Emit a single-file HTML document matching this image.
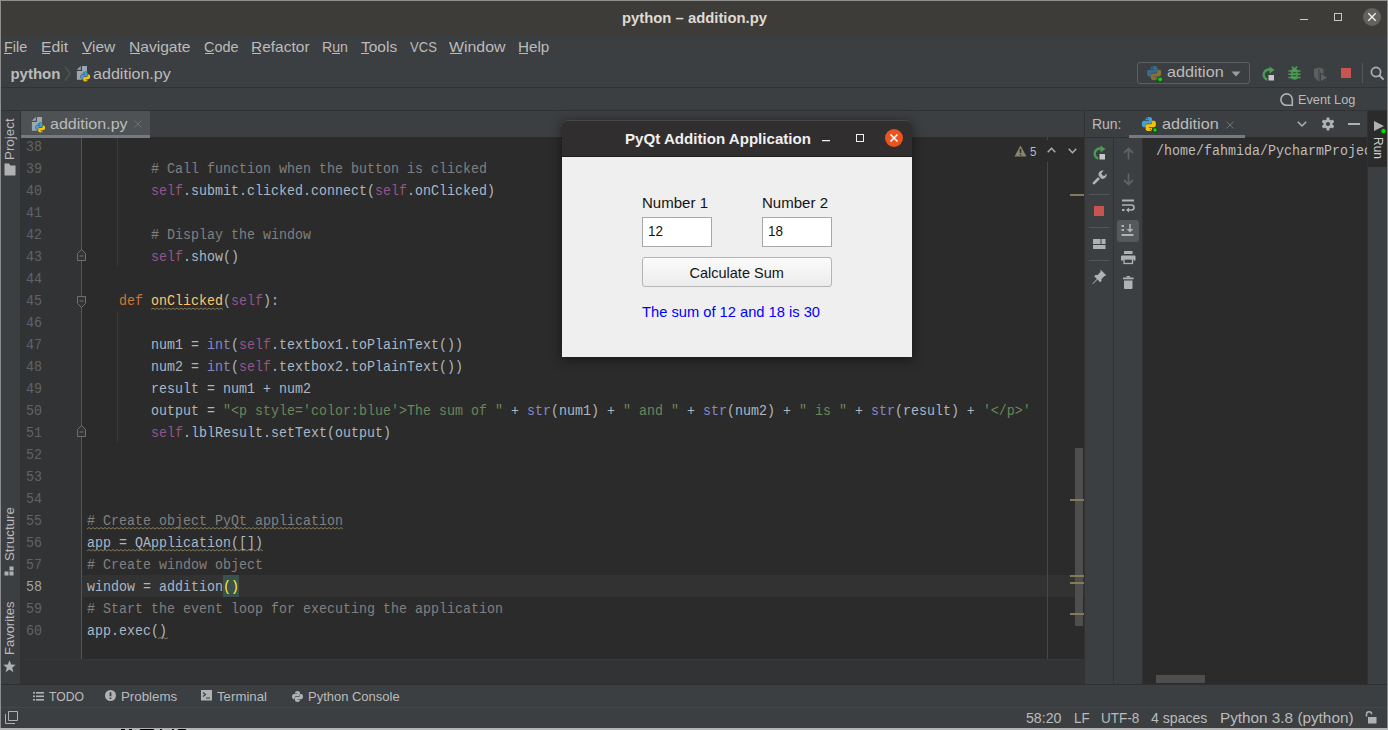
<!DOCTYPE html>
<html><head><meta charset="utf-8">
<style>
*{margin:0;padding:0;box-sizing:border-box}
html,body{width:1388px;height:730px;overflow:hidden;background:#3c3f41;position:relative}
body{font-family:"Liberation Sans",sans-serif}
.a{position:absolute}
.t{position:absolute;white-space:pre;line-height:1}
.L{font-family:"Liberation Sans",sans-serif}
.M{font-family:"Liberation Mono",monospace}
.code{position:absolute;left:87px;white-space:pre;font-family:"Liberation Mono",monospace;font-size:13.333px;line-height:22px;color:#a9b7c6}
.c{color:#808080}.k{color:#cc7832}.s{color:#94558d}.b{color:#8888c6}.g{color:#6a8759}.f{color:#ffc66d}
svg{position:absolute;overflow:visible}
</style></head><body>
<div class="a" style="left:0px;top:0px;width:1388px;height:1px;background:#8e8e8e;"></div>
<div class="a" style="left:0px;top:0px;width:1px;height:730px;background:#8e8e8e;"></div>
<div class="a" style="left:1387px;top:0px;width:1px;height:730px;background:#8e8e8e;"></div>
<div class="a" style="left:1px;top:1px;width:1386px;height:35px;background:#3d3c39;"></div>
<div class="a" style="left:1px;top:36px;width:1386px;height:51px;background:#3c3f41;"></div>
<div class="a" style="left:1px;top:87px;width:1386px;height:1px;background:#323232;"></div>
<div class="a" style="left:1px;top:88px;width:1386px;height:22px;background:#3c3f41;"></div>
<div class="a" style="left:1px;top:110px;width:1386px;height:1px;background:#323232;"></div>
<div class="a" style="left:1px;top:111px;width:19px;height:573px;background:#3c3f41;"></div>
<div class="a" style="left:20px;top:111px;width:1px;height:573px;background:#323232;"></div>
<div class="a" style="left:21px;top:111px;width:1063px;height:26px;background:#3c3f41;"></div>
<div class="a" style="left:21px;top:111px;width:129px;height:24px;background:#4e5254;"></div>
<div class="a" style="left:1084px;top:111px;width:1px;height:573px;background:#323232;"></div>
<div class="a" style="left:21px;top:137px;width:60px;height:522px;background:#313335;"></div>
<div class="a" style="left:81px;top:137px;width:1px;height:522px;background:#555555;"></div>
<div class="a" style="left:82px;top:137px;width:1002px;height:522px;background:#2b2b2b;"></div>
<div class="a" style="left:21px;top:135px;width:129px;height:3px;background:#747a80;"></div>
<div class="a" style="left:82px;top:575px;width:1002px;height:22px;background:#323232;"></div>
<div class="a" style="left:21px;top:659px;width:1063px;height:1px;background:#353739;"></div>
<div class="a" style="left:21px;top:660px;width:1063px;height:24px;background:#313335;"></div>
<div class="a" style="left:1085px;top:111px;width:282px;height:26px;background:#3c3f41;"></div>
<div class="a" style="left:1085px;top:137px;width:58px;height:1px;background:#323232;"></div>
<div class="a" style="left:1085px;top:138px;width:28px;height:546px;background:#3c3f41;"></div>
<div class="a" style="left:1113px;top:138px;width:1px;height:546px;background:#323232;"></div>
<div class="a" style="left:1114px;top:138px;width:28px;height:546px;background:#3c3f41;"></div>
<div class="a" style="left:1142px;top:138px;width:1px;height:546px;background:#323232;"></div>
<div class="a" style="left:1143px;top:137px;width:224px;height:547px;background:#2b2b2b;"></div>
<div class="a" style="left:1129px;top:135px;width:116px;height:3px;background:#747a80;"></div>
<div class="a" style="left:1367px;top:111px;width:1px;height:573px;background:#323232;"></div>
<div class="a" style="left:1368px;top:111px;width:19px;height:573px;background:#3c3f41;"></div>
<div class="a" style="left:1368px;top:111px;width:19px;height:56px;background:#2b2b2b;"></div>
<div class="a" style="left:1px;top:684px;width:1386px;height:1px;background:#2e3032;"></div>
<div class="a" style="left:1px;top:685px;width:1386px;height:22px;background:#3c3f41;"></div>
<div class="a" style="left:1px;top:707px;width:1386px;height:1px;background:#4a4542;"></div>
<div class="a" style="left:1px;top:708px;width:1386px;height:20px;background:#3c3f41;"></div>
<div class="a" style="left:0px;top:728px;width:1388px;height:2px;background:#b4b4b4;"></div>
<div class="t L" style="left:622px;top:10.25px;font-size:15px;color:#dfdbd2;font-weight:700;transform:scaleX(0.9886);transform-origin:0 0;">python – addition.py</div>
<div class="a" style="left:1300px;top:19px;width:8px;height:1px;background:#cfcfcf;"></div>
<div class="a" style="left:1334px;top:13px;width:8px;height:8px;background:transparent;border:1.5px solid #c8c8c8"></div>
<div class="a" style="left:1363px;top:8px;width:18px;height:18px;border-radius:50%;background:#636260"></div>
<svg style="left:1363px;top:8px" width="18" height="18"><path d="M5.3 5.3L12.7 12.7M12.7 5.3L5.3 12.7" stroke="#f2f2f2" stroke-width="1.3"/></svg>
<div class="t L" style="left:4.4px;top:39.25px;font-size:15px;color:#bbbbbb;transform:scaleX(0.9598);transform-origin:0 0;">File</div>
<div class="t L" style="left:41.4px;top:39.25px;font-size:15px;color:#bbbbbb;transform:scaleX(1.0518);transform-origin:0 0;">Edit</div>
<div class="t L" style="left:82.1px;top:39.25px;font-size:15px;color:#bbbbbb;transform:scaleX(1.0326);transform-origin:0 0;">View</div>
<div class="t L" style="left:129.1px;top:39.25px;font-size:15px;color:#bbbbbb;transform:scaleX(1.0388);transform-origin:0 0;">Navigate</div>
<div class="t L" style="left:204.2px;top:39.25px;font-size:15px;color:#bbbbbb;transform:scaleX(0.9621);transform-origin:0 0;">Code</div>
<div class="t L" style="left:251.2px;top:39.25px;font-size:15px;color:#bbbbbb;transform:scaleX(1.0335);transform-origin:0 0;">Refactor</div>
<div class="t L" style="left:322px;top:39.25px;font-size:15px;color:#bbbbbb;transform:scaleX(0.9444);transform-origin:0 0;">Run</div>
<div class="t L" style="left:360.8px;top:39.25px;font-size:15px;color:#bbbbbb;transform:scaleX(1.0334);transform-origin:0 0;">Tools</div>
<div class="t L" style="left:410px;top:39.25px;font-size:15px;color:#bbbbbb;transform:scaleX(0.8721);transform-origin:0 0;">VCS</div>
<div class="t L" style="left:449px;top:39.25px;font-size:15px;color:#bbbbbb;transform:scaleX(1.0589);transform-origin:0 0;">Window</div>
<div class="t L" style="left:518px;top:39.25px;font-size:15px;color:#bbbbbb;transform:scaleX(1.0143);transform-origin:0 0;">Help</div>
<div class="a" style="left:4px;top:53px;width:8px;height:1px;background:#bbbbbb;"></div>
<div class="a" style="left:42px;top:53px;width:8px;height:1px;background:#bbbbbb;"></div>
<div class="a" style="left:82px;top:53px;width:9px;height:1px;background:#bbbbbb;"></div>
<div class="a" style="left:130px;top:53px;width:10px;height:1px;background:#bbbbbb;"></div>
<div class="a" style="left:205px;top:53px;width:9px;height:1px;background:#bbbbbb;"></div>
<div class="a" style="left:252px;top:53px;width:9px;height:1px;background:#bbbbbb;"></div>
<div class="a" style="left:332px;top:53px;width:8px;height:1px;background:#bbbbbb;"></div>
<div class="a" style="left:361px;top:53px;width:8px;height:1px;background:#bbbbbb;"></div>
<div class="a" style="left:450px;top:53px;width:12px;height:1px;background:#bbbbbb;"></div>
<div class="a" style="left:519px;top:53px;width:9px;height:1px;background:#bbbbbb;"></div>
<div class="t L" style="left:10.4px;top:66.25px;font-size:15px;color:#bbbbbb;font-weight:700;">python</div>
<svg style="left:64px;top:66px" width="7" height="15"><path d="M1 0.5L6 7.5L1 14.5" stroke="#5e6366" stroke-width="1" fill="none"/></svg>
<div class="t L" style="left:93.4px;top:66.25px;font-size:15px;color:#bbbbbb;transform:scaleX(1.0722);transform-origin:0 0;">addition.py</div>
<div class="t L" style="left:49.5px;top:116.25px;font-size:15px;color:#bbbbbb;transform:scaleX(1.0694);transform-origin:0 0;">addition.py</div>
<svg style="left:134px;top:120px" width="8" height="8"><path d="M0.5 0.5L7.5 7.5M7.5 0.5L0.5 7.5" stroke="#6e7173" stroke-width="1"/></svg>
<div class="t L" style="left:1297.7px;top:94.38px;font-size:12.5px;color:#bbbbbb;transform:scaleX(1.0178);transform-origin:0 0;">Event Log</div>
<div class="t L" style="left:1091.8px;top:116.67px;font-size:14.5px;color:#bbbbbb;transform:scaleX(0.9628);transform-origin:0 0;">Run:</div>
<div class="t L" style="left:1161.5px;top:116.67px;font-size:14.5px;color:#bbbbbb;transform:scaleX(1.1162);transform-origin:0 0;">addition</div>
<svg style="left:1226px;top:121px" width="8" height="8"><path d="M0.5 0.5L7.5 7.5M7.5 0.5L0.5 7.5" stroke="#6e7173" stroke-width="1"/></svg>
<div class="t L" style="left:1166.6px;top:64.67px;font-size:14.5px;color:#bbbbbb;transform:scaleX(1.1162);transform-origin:0 0;">addition</div>
<div class="t L" style="left:48.8px;top:689.52px;font-size:13.5px;color:#bbbbbb;transform:scaleX(0.9029);transform-origin:0 0;">TODO</div>
<div class="t L" style="left:121.4px;top:689.52px;font-size:13.5px;color:#bbbbbb;transform:scaleX(0.9854);transform-origin:0 0;">Problems</div>
<div class="t L" style="left:217.4px;top:689.52px;font-size:13.5px;color:#bbbbbb;transform:scaleX(0.9801);transform-origin:0 0;">Terminal</div>
<div class="t L" style="left:308.2px;top:689.52px;font-size:13.5px;color:#bbbbbb;transform:scaleX(0.9610);transform-origin:0 0;">Python Console</div>
<div class="t L" style="left:1025.8px;top:710.67px;font-size:14.5px;color:#bbbbbb;transform:scaleX(0.9753);transform-origin:0 0;">58:20</div>
<div class="t L" style="left:1073.5px;top:710.67px;font-size:14.5px;color:#bbbbbb;transform:scaleX(0.9160);transform-origin:0 0;">LF</div>
<div class="t L" style="left:1101.2px;top:710.67px;font-size:14.5px;color:#bbbbbb;transform:scaleX(0.9296);transform-origin:0 0;">UTF-8</div>
<div class="t L" style="left:1151px;top:710.67px;font-size:14.5px;color:#bbbbbb;transform:scaleX(0.9716);transform-origin:0 0;">4 spaces</div>
<div class="t L" style="left:1220.2px;top:710.67px;font-size:14.5px;color:#bbbbbb;transform:scaleX(1.0548);transform-origin:0 0;">Python 3.8 (python)</div>
<div class="t M" style="left:26px;top:140.87px;font-size:13.333px;color:#606366;transform:scaleY(1.13);transform-origin:0 10.13px;">38</div>
<div class="t M" style="left:26px;top:162.87px;font-size:13.333px;color:#606366;transform:scaleY(1.13);transform-origin:0 10.13px;">39</div>
<div class="t M" style="left:26px;top:184.87px;font-size:13.333px;color:#606366;transform:scaleY(1.13);transform-origin:0 10.13px;">40</div>
<div class="t M" style="left:26px;top:206.87px;font-size:13.333px;color:#606366;transform:scaleY(1.13);transform-origin:0 10.13px;">41</div>
<div class="t M" style="left:26px;top:228.87px;font-size:13.333px;color:#606366;transform:scaleY(1.13);transform-origin:0 10.13px;">42</div>
<div class="t M" style="left:26px;top:250.87px;font-size:13.333px;color:#606366;transform:scaleY(1.13);transform-origin:0 10.13px;">43</div>
<div class="t M" style="left:26px;top:272.87px;font-size:13.333px;color:#606366;transform:scaleY(1.13);transform-origin:0 10.13px;">44</div>
<div class="t M" style="left:26px;top:294.87px;font-size:13.333px;color:#606366;transform:scaleY(1.13);transform-origin:0 10.13px;">45</div>
<div class="t M" style="left:26px;top:316.87px;font-size:13.333px;color:#606366;transform:scaleY(1.13);transform-origin:0 10.13px;">46</div>
<div class="t M" style="left:26px;top:338.87px;font-size:13.333px;color:#606366;transform:scaleY(1.13);transform-origin:0 10.13px;">47</div>
<div class="t M" style="left:26px;top:360.87px;font-size:13.333px;color:#606366;transform:scaleY(1.13);transform-origin:0 10.13px;">48</div>
<div class="t M" style="left:26px;top:382.87px;font-size:13.333px;color:#606366;transform:scaleY(1.13);transform-origin:0 10.13px;">49</div>
<div class="t M" style="left:26px;top:404.87px;font-size:13.333px;color:#606366;transform:scaleY(1.13);transform-origin:0 10.13px;">50</div>
<div class="t M" style="left:26px;top:426.87px;font-size:13.333px;color:#606366;transform:scaleY(1.13);transform-origin:0 10.13px;">51</div>
<div class="t M" style="left:26px;top:448.87px;font-size:13.333px;color:#606366;transform:scaleY(1.13);transform-origin:0 10.13px;">52</div>
<div class="t M" style="left:26px;top:470.87px;font-size:13.333px;color:#606366;transform:scaleY(1.13);transform-origin:0 10.13px;">53</div>
<div class="t M" style="left:26px;top:492.87px;font-size:13.333px;color:#606366;transform:scaleY(1.13);transform-origin:0 10.13px;">54</div>
<div class="t M" style="left:26px;top:514.87px;font-size:13.333px;color:#606366;transform:scaleY(1.13);transform-origin:0 10.13px;">55</div>
<div class="t M" style="left:26px;top:536.87px;font-size:13.333px;color:#606366;transform:scaleY(1.13);transform-origin:0 10.13px;">56</div>
<div class="t M" style="left:26px;top:558.87px;font-size:13.333px;color:#606366;transform:scaleY(1.13);transform-origin:0 10.13px;">57</div>
<div class="t M" style="left:26px;top:580.87px;font-size:13.333px;color:#a4a3a3;transform:scaleY(1.13);transform-origin:0 10.13px;">58</div>
<div class="t M" style="left:26px;top:602.87px;font-size:13.333px;color:#606366;transform:scaleY(1.13);transform-origin:0 10.13px;">59</div>
<div class="t M" style="left:26px;top:624.87px;font-size:13.333px;color:#606366;transform:scaleY(1.13);transform-origin:0 10.13px;">60</div>
<div class="t M" style="left:87px;top:162.87px;font-size:13.333px;color:#a9b7c6;transform:scaleY(1.13);transform-origin:0 10.13px">        <span class="c"># Call function when the button is clicked</span></div>
<div class="t M" style="left:87px;top:184.87px;font-size:13.333px;color:#a9b7c6;transform:scaleY(1.13);transform-origin:0 10.13px">        <span class="s">self</span>.submit.clicked.connect(<span class="s">self</span>.onClicked)</div>
<div class="t M" style="left:87px;top:228.87px;font-size:13.333px;color:#a9b7c6;transform:scaleY(1.13);transform-origin:0 10.13px">        <span class="c"># Display the window</span></div>
<div class="t M" style="left:87px;top:250.87px;font-size:13.333px;color:#a9b7c6;transform:scaleY(1.13);transform-origin:0 10.13px">        <span class="s">self</span>.show()</div>
<div class="t M" style="left:87px;top:294.87px;font-size:13.333px;color:#a9b7c6;transform:scaleY(1.13);transform-origin:0 10.13px">    <span class="k">def</span> <span class="f">onClicked</span>(<span class="s">self</span>):</div>
<div class="t M" style="left:87px;top:338.87px;font-size:13.333px;color:#a9b7c6;transform:scaleY(1.13);transform-origin:0 10.13px">        num1 = <span class="b">int</span>(<span class="s">self</span>.textbox1.toPlainText())</div>
<div class="t M" style="left:87px;top:360.87px;font-size:13.333px;color:#a9b7c6;transform:scaleY(1.13);transform-origin:0 10.13px">        num2 = <span class="b">int</span>(<span class="s">self</span>.textbox2.toPlainText())</div>
<div class="t M" style="left:87px;top:382.87px;font-size:13.333px;color:#a9b7c6;transform:scaleY(1.13);transform-origin:0 10.13px">        result = num1 + num2</div>
<div class="t M" style="left:87px;top:404.87px;font-size:13.333px;color:#a9b7c6;transform:scaleY(1.13);transform-origin:0 10.13px">        output = <span class="g">"&lt;p style='color:blue'&gt;The sum of "</span> + <span class="b">str</span>(num1) + <span class="g">" and "</span> + <span class="b">str</span>(num2) + <span class="g">" is "</span> + <span class="b">str</span>(result) + <span class="g">'&lt;/p&gt;'</span></div>
<div class="t M" style="left:87px;top:426.87px;font-size:13.333px;color:#a9b7c6;transform:scaleY(1.13);transform-origin:0 10.13px">        <span class="s">self</span>.lblResult.setText(output)</div>
<div class="t M" style="left:87px;top:514.87px;font-size:13.333px;color:#a9b7c6;transform:scaleY(1.13);transform-origin:0 10.13px"><span class="c"># Create object PyQt application</span></div>
<div class="t M" style="left:87px;top:536.87px;font-size:13.333px;color:#a9b7c6;transform:scaleY(1.13);transform-origin:0 10.13px">app = QApplication([])</div>
<div class="t M" style="left:87px;top:558.87px;font-size:13.333px;color:#a9b7c6;transform:scaleY(1.13);transform-origin:0 10.13px"><span class="c"># Create window object</span></div>
<div class="a" style="left:223px;top:575px;width:16px;height:22px;background:#3b514d;"></div>
<div class="t M" style="left:87px;top:580.87px;font-size:13.333px;color:#a9b7c6;transform:scaleY(1.13);transform-origin:0 10.13px">window = addition<span style="color:#ffef28">()</span></div>
<div class="t M" style="left:87px;top:602.87px;font-size:13.333px;color:#a9b7c6;transform:scaleY(1.13);transform-origin:0 10.13px"><span class="c"># Start the event loop for executing the application</span></div>
<div class="t M" style="left:87px;top:624.87px;font-size:13.333px;color:#a9b7c6;transform:scaleY(1.13);transform-origin:0 10.13px">app.exec()</div>
<div class="a" style="left:1143px;top:138px;width:224px;height:30px;overflow:hidden"><div class="t M" style="left:13px;top:6.87px;font-size:13.333px;color:#bbbbbb;transform:scaleY(1.13);transform-origin:0 10.13px">/home/fahmida/PycharmProjects/python/addition.py</div></div>
<div class="a" style="left:562px;top:120px;width:350px;height:237px;border-radius:6px 6px 0 0;background:#302e2e;border-top:1px solid #4a4846;box-shadow:0 2px 12px rgba(0,0,0,0.5)"></div>
<div class="a" style="left:562px;top:156px;width:350px;height:1px;background:#1e1e1e;"></div>
<div class="a" style="left:562px;top:157px;width:350px;height:200px;background:#efefef;"></div>
<div class="t L" style="left:624.8px;top:131.25px;font-size:15px;color:#f0f0f0;font-weight:700;transform:scaleX(1.0069);transform-origin:0 0;">PyQt Addition Application</div>
<div class="a" style="left:822px;top:140px;width:8px;height:1px;background:#f0f0f0;box-shadow:0 0.5px 0 rgba(240,240,240,0.5)"></div>
<div class="a" style="left:856px;top:134px;width:8px;height:8px;background:transparent;border:1.5px solid #f0f0f0"></div>
<div class="a" style="left:885px;top:129px;width:18px;height:18px;border-radius:50%;background:#e95420"></div>
<svg style="left:885px;top:129px" width="18" height="18"><path d="M5.5 5.5L12.5 12.5M12.5 5.5L5.5 12.5" stroke="#ffffff" stroke-width="1.6"/></svg>
<div class="t L" style="left:642.3px;top:195.68px;font-size:14.5px;color:#141414;transform:scaleX(1.0366);transform-origin:0 0;">Number 1</div>
<div class="t L" style="left:762.4px;top:195.68px;font-size:14.5px;color:#141414;transform:scaleX(1.0366);transform-origin:0 0;">Number 2</div>
<div class="a" style="left:642px;top:217px;width:70px;height:30px;background:#ffffff;border:1px solid #a8a8a8"></div>
<div class="a" style="left:762px;top:217px;width:70px;height:30px;background:#ffffff;border:1px solid #a8a8a8"></div>
<div class="t L" style="left:648px;top:223.68px;font-size:14.5px;color:#141414;transform:scaleX(0.9293);transform-origin:0 0;">12</div>
<div class="t L" style="left:768px;top:223.68px;font-size:14.5px;color:#141414;transform:scaleX(0.9293);transform-origin:0 0;">18</div>
<div class="a" style="left:642px;top:257px;width:190px;height:30px;background:linear-gradient(#fbfbfb,#ececec);border:1px solid #b4b4b4;border-radius:3px"></div>
<div class="t L" style="left:689.5px;top:265.68px;font-size:14.5px;color:#141414;">Calculate Sum</div>
<div class="t L" style="left:642px;top:304.68px;font-size:14.5px;color:#0000ff;transform:scaleX(1.0129);transform-origin:0 0;">The sum of 12 and 18 is 30</div>
<svg style="left:76px;top:65px;" width="16" height="17" viewBox="0 0 16 17"><path d="M0.8 4.7L4.8 0.9V4.7Z" fill="#9aa7b0"/><path d="M6 1H11V14.8H0.9V5.9H6Z" fill="#9aa7b0"/><g transform="translate(4.4,6.7) scale(0.63)"><path d="M4.5 3Q4.5 0.5 8 0.5Q11.5 0.5 11.5 3V6Q11.5 7.7 9.8 7.7H6.3Q4.5 7.7 4.5 9.5V11.5H2.6Q0.5 11.5 0.5 8Q0.5 4.5 2.6 4.5H8V3.8H4.5Z" fill="#40a0d8" stroke="#3c3f41" stroke-width="1.3" paint-order="stroke"/><path d="M4.5 3Q4.5 0.5 8 0.5Q11.5 0.5 11.5 3V6Q11.5 7.7 9.8 7.7H6.3Q4.5 7.7 4.5 9.5V11.5H2.6Q0.5 11.5 0.5 8Q0.5 4.5 2.6 4.5H8V3.8H4.5Z" fill="#f5c400" transform="rotate(180 8 8)" stroke="#3c3f41" stroke-width="1.3" paint-order="stroke"/><circle cx="6.3" cy="2.2" r="0.75" fill="#2b3b4a"/><circle cx="9.7" cy="13.8" r="0.75" fill="#6b5a10"/></g></svg>
<svg style="left:31px;top:116px;" width="16" height="17" viewBox="0 0 16 17"><path d="M0.8 4.7L4.8 0.9V4.7Z" fill="#9aa7b0"/><path d="M6 1H11V14.8H0.9V5.9H6Z" fill="#9aa7b0"/><g transform="translate(4.4,6.7) scale(0.63)"><path d="M4.5 3Q4.5 0.5 8 0.5Q11.5 0.5 11.5 3V6Q11.5 7.7 9.8 7.7H6.3Q4.5 7.7 4.5 9.5V11.5H2.6Q0.5 11.5 0.5 8Q0.5 4.5 2.6 4.5H8V3.8H4.5Z" fill="#40a0d8" stroke="#3c3f41" stroke-width="1.3" paint-order="stroke"/><path d="M4.5 3Q4.5 0.5 8 0.5Q11.5 0.5 11.5 3V6Q11.5 7.7 9.8 7.7H6.3Q4.5 7.7 4.5 9.5V11.5H2.6Q0.5 11.5 0.5 8Q0.5 4.5 2.6 4.5H8V3.8H4.5Z" fill="#f5c400" transform="rotate(180 8 8)" stroke="#3c3f41" stroke-width="1.3" paint-order="stroke"/><circle cx="6.3" cy="2.2" r="0.75" fill="#2b3b4a"/><circle cx="9.7" cy="13.8" r="0.75" fill="#6b5a10"/></g></svg>
<svg style="left:1141px;top:116px;" width="16" height="16" viewBox="0 0 16 16"><g transform="translate(0.4,0.5) scale(0.933)"><path d="M4.5 3Q4.5 0.5 8 0.5Q11.5 0.5 11.5 3V6Q11.5 7.7 9.8 7.7H6.3Q4.5 7.7 4.5 9.5V11.5H2.6Q0.5 11.5 0.5 8Q0.5 4.5 2.6 4.5H8V3.8H4.5Z" fill="#40a0d8" /><path d="M4.5 3Q4.5 0.5 8 0.5Q11.5 0.5 11.5 3V6Q11.5 7.7 9.8 7.7H6.3Q4.5 7.7 4.5 9.5V11.5H2.6Q0.5 11.5 0.5 8Q0.5 4.5 2.6 4.5H8V3.8H4.5Z" fill="#f5c400" transform="rotate(180 8 8)" /><circle cx="6.3" cy="2.2" r="0.75" fill="#2b3b4a"/><circle cx="9.7" cy="13.8" r="0.75" fill="#6b5a10"/></g><circle cx="14" cy="14" r="2.3" fill="#00e000" stroke="#1e1e1e" stroke-width="0.8"/></svg>
<div class="a" style="left:1137px;top:62px;width:113px;height:22px;border:1px solid #5e6060;border-radius:3px"></div>
<svg style="left:1146px;top:65px;" width="16" height="16" viewBox="0 0 16 16"><g transform="translate(0.5,0.5) scale(0.95)"><path d="M4.5 3Q4.5 0.5 8 0.5Q11.5 0.5 11.5 3V6Q11.5 7.7 9.8 7.7H6.3Q4.5 7.7 4.5 9.5V11.5H2.6Q0.5 11.5 0.5 8Q0.5 4.5 2.6 4.5H8V3.8H4.5Z" fill="#3c6a8a" /><path d="M4.5 3Q4.5 0.5 8 0.5Q11.5 0.5 11.5 3V6Q11.5 7.7 9.8 7.7H6.3Q4.5 7.7 4.5 9.5V11.5H2.6Q0.5 11.5 0.5 8Q0.5 4.5 2.6 4.5H8V3.8H4.5Z" fill="#85723a" transform="rotate(180 8 8)" /><circle cx="6.3" cy="2.2" r="0.75" fill="#2b3b4a"/><circle cx="9.7" cy="13.8" r="0.75" fill="#6b5a10"/></g><circle cx="14.2" cy="14.3" r="2.4" fill="#00e000" stroke="#2a2a2a" stroke-width="0.7"/></svg>
<svg style="left:1231px;top:71px;" width="10" height="6" viewBox="0 0 10 6"><path d="M0.5 0.5H9.5L5 5.5Z" fill="#9a9da1"/></svg>
<svg style="left:1261px;top:66px;" width="14" height="15" viewBox="0 0 14 15"><path d="M9.4 3.8A5 5 0 1 0 6.2 13.6" stroke="#499c54" stroke-width="2.4" fill="none"/><path d="M8.5 0.5L13.5 4L8.5 7.5Z" fill="#499c54"/><rect x="7.5" y="9" width="5.5" height="5.5" fill="#c7c7c7"/></svg>
<svg style="left:1287.5px;top:66px;" width="13" height="14" viewBox="0 0 13 14"><path d="M3.9 0.6L6.2 2.8M9.1 0.6L6.8 2.8" stroke="#499c54" stroke-width="1.6"/><path d="M3.2 5Q3.2 2.5 6.5 2.5Q9.8 2.5 9.8 5V11Q9.8 13.7 6.5 13.7Q3.2 13.7 3.2 11Z" fill="#499c54"/><path d="M0.4 5.1H12.6M0.4 8.3H12.6M0.4 11.5H12.6" stroke="#499c54" stroke-width="1.5"/><path d="M4.7 6.7H8.3M4.7 9.7H8.3" stroke="#3c3f41" stroke-width="1.1"/></svg>
<svg style="left:1312.5px;top:67px;" width="16" height="15" viewBox="0 0 16 15"><path d="M1 2L6 0.5L10.5 2V8Q10.5 12 6 14Q1.5 12 1 8Z" fill="#5e6060"/><path d="M6 2V13" stroke="#3c3f41" stroke-width="1"/><path d="M7.5 6L15 10.5L7.5 15Z" fill="#5e6060" stroke="#3c3f41" stroke-width="1"/></svg>
<div class="a" style="left:1341px;top:68px;width:10px;height:10px;background:#c75450;"></div>
<div class="a" style="left:1362px;top:63px;width:1px;height:20px;background:#515658;"></div>
<svg style="left:1370px;top:66px;" width="15" height="15" viewBox="0 0 15 15"><circle cx="6" cy="6" r="4.6" stroke="#afb1b3" stroke-width="1.7" fill="none"/><path d="M9.3 9.3L13.6 13.6" stroke="#afb1b3" stroke-width="2"/></svg>
<svg style="left:1280px;top:93px;" width="14" height="13" viewBox="0 0 14 13"><path d="M12.3 12.3H6.5A5.7 5.7 0 1 1 12.3 6.5Z" stroke="#afb1b3" stroke-width="1.6" fill="none"/></svg>
<svg style="left:1297px;top:121px;" width="10" height="6" viewBox="0 0 10 6"><path d="M0.8 0.8L5 5L9.2 0.8" stroke="#afb1b3" stroke-width="1.5" fill="none"/></svg>
<svg style="left:1321px;top:117px;" width="14" height="14" viewBox="0 0 14 14"><rect x="5.5" y="0.6" width="3" height="12.8" rx="0.7" fill="#afb1b3" transform="rotate(0 7 7)"/><rect x="5.5" y="0.6" width="3" height="12.8" rx="0.7" fill="#afb1b3" transform="rotate(60 7 7)"/><rect x="5.5" y="0.6" width="3" height="12.8" rx="0.7" fill="#afb1b3" transform="rotate(120 7 7)"/><circle cx="7" cy="7" r="4.6" fill="#afb1b3"/><circle cx="7" cy="7" r="2" fill="#3c3f41"/></svg>
<div class="a" style="left:1348px;top:123px;width:12px;height:2px;background:#afb1b3;"></div>
<svg style="left:1373px;top:120px;" width="14" height="14" viewBox="0 0 14 14"><path d="M1 1L11 6L1 11Z" fill="#afb1b3"/><circle cx="10.5" cy="11" r="2.6" fill="#00e000" stroke="#2b2b2b" stroke-width="0.7"/></svg>
<div class="t L" style="left:3.3px;top:160.4px;font-size:13px;color:#bbbbbb;transform-origin:0 0;transform:rotate(-90deg) scaleX(1.0280)">Project</div>
<div class="t L" style="left:3.3px;top:560.8px;font-size:13px;color:#bbbbbb;transform-origin:0 0;transform:rotate(-90deg) scaleX(1.0199)">Structure</div>
<div class="t L" style="left:3.3px;top:655px;font-size:13px;color:#bbbbbb;transform-origin:0 0;transform:rotate(-90deg) scaleX(0.9987)">Favorites</div>
<div class="t L" style="left:1385px;top:137px;font-size:13px;color:#cfcfcf;transform-origin:0 0;transform:rotate(90deg) scaleX(0.9221)">Run</div>
<svg style="left:4px;top:163px;" width="12" height="13" viewBox="0 0 12 13"><path d="M0.5 0.5H5L6.5 2.5H11.5V12.5H0.5Z" fill="#afb1b3"/></svg>
<svg style="left:4px;top:566px;" width="11" height="11" viewBox="0 0 11 11"><rect x="5.5" y="0.5" width="4" height="4" fill="#afb1b3"/><rect x="0.5" y="5.5" width="4" height="4" fill="#afb1b3"/><rect x="5.5" y="5.5" width="4" height="4" fill="#afb1b3"/></svg>
<svg style="left:3px;top:660px;" width="13" height="13" viewBox="0 0 13 13"><path d="M6.5 0.3L8.2 4.6L12.7 4.8L9.2 7.7L10.4 12.2L6.5 9.6L2.6 12.2L3.8 7.7L0.3 4.8L4.8 4.6Z" fill="#afb1b3"/></svg>
<div class="a" style="left:117px;top:138px;width:1px;height:128px;background:#3b3b3b;"></div>
<div class="a" style="left:117px;top:311px;width:1px;height:131px;background:#3b3b3b;"></div>
<div class="a" style="left:1047px;top:137px;width:1px;height:3px;background:#474747;"></div>
<div class="a" style="left:1047px;top:162px;width:1px;height:497px;background:#474747;"></div>
<svg style="left:77px;top:249px;" width="9" height="12" viewBox="0 0 9 12"><path d="M0.5 11.5V4.5L4.5 0.5L8.5 4.5V11.5Z" fill="#313335" stroke="#6f7173" stroke-width="1"/><path d="M2.5 7H6.5" stroke="#6f7173" stroke-width="1"/></svg>
<svg style="left:77px;top:295.5px;" width="9" height="12" viewBox="0 0 9 12"><path d="M0.5 0.5V7.5L4.5 11.5L8.5 7.5V0.5Z" fill="#313335" stroke="#6f7173" stroke-width="1"/><path d="M2.5 5H6.5" stroke="#6f7173" stroke-width="1"/></svg>
<svg style="left:77px;top:425px;" width="9" height="12" viewBox="0 0 9 12"><path d="M0.5 11.5V4.5L4.5 0.5L8.5 4.5V11.5Z" fill="#313335" stroke="#6f7173" stroke-width="1"/><path d="M2.5 7H6.5" stroke="#6f7173" stroke-width="1"/></svg>
<svg style="left:1013.5px;top:144.5px;" width="13" height="12" viewBox="0 0 13 12"><path d="M6.5 0.5L12.5 11.5H0.5Z" fill="#8c8469"/><path d="M6.5 4V8M6.5 9.3V10.6" stroke="#2b2b2b" stroke-width="1.5"/></svg>
<div class="t L" style="left:1029.6px;top:145.25px;font-size:13px;color:#bbbbbb;transform:scaleX(0.8847);transform-origin:0 0;">5</div>
<svg style="left:1046.5px;top:147px;" width="9" height="6" viewBox="0 0 9 6"><path d="M0.7 5.3L4.5 1.3L8.3 5.3" stroke="#afb1b3" stroke-width="1.4" fill="none"/></svg>
<svg style="left:1067.5px;top:148px;" width="9" height="6" viewBox="0 0 9 6"><path d="M0.7 0.7L4.5 4.7L8.3 0.7" stroke="#afb1b3" stroke-width="1.4" fill="none"/></svg>
<div class="a" style="left:1075px;top:448px;width:8px;height:178px;background:#4e4e4e;"></div>
<div class="a" style="left:1070px;top:194px;width:14px;height:2px;background:#847959;"></div>
<div class="a" style="left:1070px;top:498.5px;width:14px;height:2px;background:#847959;"></div>
<div class="a" style="left:1070px;top:575px;width:14px;height:2px;background:#847959;"></div>
<div class="a" style="left:1070px;top:582px;width:14px;height:2px;background:#847959;"></div>
<div class="a" style="left:1070px;top:613px;width:14px;height:2px;background:#847959;"></div>
<svg style="left:0px;top:0px;left:0;top:0" width="1" height="1" viewBox="0 0 1 1"><path d="M151 309.5L153 308L155 309.5L157 308L159 309.5L161 308L163 309.5L165 308L167 309.5L169 308L171 309.5L173 308L175 309.5L177 308L179 309.5L181 308L183 309.5L185 308L187 309.5L189 308L191 309.5L193 308L195 309.5L197 308L199 309.5L201 308L203 309.5L205 308L207 309.5L209 308L211 309.5L213 308L215 309.5L217 308L219 309.5L221 308L223 309.5" stroke="#8c7f5a" stroke-width="0.9" fill="none"/></svg>
<svg style="left:0px;top:0px;left:0;top:0" width="1" height="1" viewBox="0 0 1 1"><path d="M87 529.0L89 527.5L91 529.0L93 527.5L95 529.0L97 527.5L99 529.0L101 527.5L103 529.0L105 527.5L107 529.0L109 527.5L111 529.0L113 527.5L115 529.0L117 527.5L119 529.0L121 527.5L123 529.0L125 527.5L127 529.0L129 527.5L131 529.0L133 527.5L135 529.0L137 527.5L139 529.0L141 527.5L143 529.0L145 527.5L147 529.0L149 527.5L151 529.0L153 527.5L155 529.0L157 527.5L159 529.0L161 527.5L163 529.0L165 527.5L167 529.0L169 527.5L171 529.0L173 527.5L175 529.0L177 527.5L179 529.0L181 527.5L183 529.0L185 527.5L187 529.0L189 527.5L191 529.0L193 527.5L195 529.0L197 527.5L199 529.0L201 527.5L203 529.0L205 527.5L207 529.0L209 527.5L211 529.0L213 527.5L215 529.0L217 527.5L219 529.0L221 527.5L223 529.0L225 527.5L227 529.0L229 527.5L231 529.0L233 527.5L235 529.0L237 527.5L239 529.0L241 527.5L243 529.0L245 527.5L247 529.0L249 527.5L251 529.0L253 527.5L255 529.0L257 527.5L259 529.0L261 527.5L263 529.0L265 527.5L267 529.0L269 527.5L271 529.0L273 527.5L275 529.0L277 527.5L279 529.0L281 527.5L283 529.0L285 527.5L287 529.0L289 527.5L291 529.0L293 527.5L295 529.0L297 527.5L299 529.0L301 527.5L303 529.0L305 527.5L307 529.0L309 527.5L311 529.0L313 527.5L315 529.0L317 527.5L319 529.0L321 527.5L323 529.0L325 527.5L327 529.0L329 527.5L331 529.0L333 527.5L335 529.0L337 527.5L339 529.0L341 527.5L343 529.0" stroke="#8c7f5a" stroke-width="0.9" fill="none"/></svg>
<svg style="left:0px;top:0px;left:0;top:0" width="1" height="1" viewBox="0 0 1 1"><path d="M87 551.0L89 549.5L91 551.0L93 549.5L95 551.0L97 549.5L99 551.0L101 549.5L103 551.0L105 549.5L107 551.0L109 549.5L111 551.0L113 549.5L115 551.0L117 549.5L119 551.0L121 549.5L123 551.0L125 549.5L127 551.0L129 549.5L131 551.0L133 549.5L135 551.0L137 549.5L139 551.0L141 549.5L143 551.0L145 549.5L147 551.0L149 549.5L151 551.0L153 549.5L155 551.0L157 549.5L159 551.0L161 549.5L163 551.0L165 549.5L167 551.0L169 549.5L171 551.0L173 549.5L175 551.0L177 549.5L179 551.0L181 549.5L183 551.0L185 549.5L187 551.0L189 549.5L191 551.0L193 549.5L195 551.0L197 549.5L199 551.0L201 549.5L203 551.0L205 549.5L207 551.0L209 549.5L211 551.0L213 549.5L215 551.0L217 549.5L219 551.0L221 549.5L223 551.0L225 549.5L227 551.0L229 549.5L231 551.0L233 549.5L235 551.0L237 549.5L239 551.0L241 549.5L243 551.0L245 549.5L247 551.0L249 549.5L251 551.0L253 549.5L255 551.0L257 549.5L259 551.0L261 549.5L263 551.0" stroke="#8c7f5a" stroke-width="0.9" fill="none"/></svg>
<svg style="left:0px;top:0px;left:0;top:0" width="1" height="1" viewBox="0 0 1 1"><path d="M158 639.0L160 637.5L162 639.0L164 637.5L166 639.0L168 637.5" stroke="#8c7f5a" stroke-width="0.9" fill="none"/></svg>
<svg style="left:1092px;top:145px;" width="15" height="15" viewBox="0 0 15 15"><path d="M9.4 3.8A5 5 0 1 0 6.2 13.6" stroke="#499c54" stroke-width="2.4" fill="none"/><path d="M8.5 0.5L13.5 4L8.5 7.5Z" fill="#499c54"/><rect x="7.5" y="9" width="5.5" height="5.5" fill="#c7c7c7"/></svg>
<svg style="left:1092px;top:170px;" width="15" height="15" viewBox="0 0 15 15"><path d="M1.2 13.8L7 8" stroke="#afb1b3" stroke-width="2.6"/><path d="M6.5 5.5A4.2 4.2 0 0 1 11.8 0.6L9.4 3.2L10.3 5.2L12.3 6L14.4 3.4A4.2 4.2 0 0 1 9.4 8.8Z" fill="#afb1b3"/></svg>
<div class="a" style="left:1089px;top:194px;width:20px;height:1px;background:#515658;"></div>
<div class="a" style="left:1094px;top:206px;width:10px;height:10px;background:#c75450;"></div>
<div class="a" style="left:1089px;top:227px;width:20px;height:1px;background:#515658;"></div>
<svg style="left:1093px;top:239px;" width="13" height="11" viewBox="0 0 13 11"><rect x="0" y="0" width="7.5" height="5" fill="#afb1b3"/><rect x="8.5" y="0" width="4" height="5" fill="#afb1b3"/><rect x="0" y="6" width="12.5" height="4" fill="#afb1b3"/></svg>
<div class="a" style="left:1089px;top:260px;width:20px;height:1px;background:#515658;"></div>
<svg style="left:1092px;top:269px;" width="15" height="16" viewBox="0 0 15 16"><path d="M8.5 0.5L14.5 6.5L12.5 7L9.5 10L9.5 12L8.2 13.3L5.5 10.6L1 15L0.5 14.5L4.9 10L2.2 7.3L3.5 6L5.5 6L8.5 3Z" fill="#afb1b3"/></svg>
<svg style="left:1123px;top:147px;" width="11" height="13" viewBox="0 0 11 13"><path d="M5.5 12.5V1.5M1 6L5.5 1.5L10 6" stroke="#5f6264" stroke-width="1.8" fill="none"/></svg>
<svg style="left:1123px;top:173px;" width="11" height="13" viewBox="0 0 11 13"><path d="M5.5 0.5V11.5M1 7L5.5 11.5L10 7" stroke="#5f6264" stroke-width="1.8" fill="none"/></svg>
<svg style="left:1121px;top:199px;" width="14" height="14" viewBox="0 0 14 14"><path d="M1 1.5H13" stroke="#afb1b3" stroke-width="2"/><path d="M1 6H10.5A2.5 2.5 0 0 1 10.5 11H7" stroke="#afb1b3" stroke-width="1.6" fill="none"/><path d="M8 8.5L5 11L8 13.5Z" fill="#afb1b3"/><rect x="1" y="10" width="2.5" height="2" fill="#afb1b3"/></svg>
<div class="a" style="left:1117px;top:220px;width:22px;height:22px;border-radius:3px;background:#55595c"></div>
<svg style="left:1121px;top:224px;" width="14" height="13" viewBox="0 0 14 13"><rect x="0.5" y="1" width="2.5" height="2" fill="#afb1b3"/><rect x="0.5" y="5" width="2.5" height="2" fill="#afb1b3"/><path d="M9 0V7" stroke="#afb1b3" stroke-width="1.6"/><path d="M5.5 5L9 8.5L12.5 5Z" fill="#afb1b3"/><rect x="0.5" y="10" width="12" height="2" fill="#afb1b3"/></svg>
<svg style="left:1121px;top:251px;" width="15" height="13" viewBox="0 0 15 13"><rect x="3" y="0" width="8.5" height="3" fill="#afb1b3"/><path d="M1 4.5H13.5Q14.5 4.5 14.5 5.5V9.5H12.5V8H2.5V9.5H0V5.5Q0 4.5 1 4.5Z" fill="#afb1b3"/><rect x="3" y="8" width="8.5" height="4.5" fill="none" stroke="#afb1b3" stroke-width="1.3"/></svg>
<svg style="left:1122.5px;top:275.5px;" width="11" height="14" viewBox="0 0 11 14"><rect x="0" y="1.5" width="10.5" height="1.8" fill="#afb1b3"/><rect x="3.5" y="0" width="3.5" height="1.5" fill="#afb1b3"/><path d="M1 4.5H9.5V12Q9.5 13 8.5 13H2Q1 13 1 12Z" fill="#afb1b3"/></svg>
<div class="a" style="left:1156px;top:675px;width:49px;height:8px;background:#4e4e4e;"></div>
<svg style="left:33px;top:692px;" width="11" height="9" viewBox="0 0 11 9"><rect x="0" y="0" width="2" height="1.6" fill="#afb1b3"/><rect x="3" y="0" width="8" height="1.6" fill="#afb1b3"/><rect x="0" y="3.5" width="2" height="1.6" fill="#afb1b3"/><rect x="3" y="3.5" width="8" height="1.6" fill="#afb1b3"/><rect x="0" y="7" width="2" height="1.6" fill="#afb1b3"/><rect x="3" y="7" width="8" height="1.6" fill="#afb1b3"/></svg>
<svg style="left:105px;top:690px;" width="12" height="12" viewBox="0 0 12 12"><circle cx="5.5" cy="5.5" r="5.5" fill="#afb1b3"/><path d="M5.5 2.2V6.3M5.5 7.6V9" stroke="#3c3f41" stroke-width="1.8"/></svg>
<svg style="left:201px;top:690px;" width="12" height="11" viewBox="0 0 12 11"><rect x="0" y="0" width="11" height="10.5" fill="#afb1b3"/><path d="M2 2.5L4.5 4.5L2 6.5" stroke="#3c3f41" stroke-width="1.2" fill="none"/><path d="M5 8H9" stroke="#3c3f41" stroke-width="1"/></svg>
<svg style="left:291.5px;top:690.5px;" width="12" height="12" viewBox="0 0 12 12"><g transform="translate(-0.35,-0.3) scale(0.733)"><path d="M4.5 3Q4.5 0.5 8 0.5Q11.5 0.5 11.5 3V6Q11.5 7.7 9.8 7.7H6.3Q4.5 7.7 4.5 9.5V11.5H2.6Q0.5 11.5 0.5 8Q0.5 4.5 2.6 4.5H8V3.8H4.5Z" fill="#afb1b3" stroke="#3c3f41" stroke-width="1.2" paint-order="stroke"/><path d="M4.5 3Q4.5 0.5 8 0.5Q11.5 0.5 11.5 3V6Q11.5 7.7 9.8 7.7H6.3Q4.5 7.7 4.5 9.5V11.5H2.6Q0.5 11.5 0.5 8Q0.5 4.5 2.6 4.5H8V3.8H4.5Z" fill="#afb1b3" stroke="#3c3f41" stroke-width="1.2" paint-order="stroke" transform="rotate(180 8 8)"/></g></svg>
<svg style="left:5px;top:711px;" width="13" height="13" viewBox="0 0 13 13"><path d="M3.5 0.5H12.5V9.5H3.5Z" stroke="#afb1b3" stroke-width="1" fill="none"/><path d="M0.5 3V12.5H10" stroke="#afb1b3" stroke-width="1" fill="none"/></svg>
<svg style="left:1364.5px;top:711px;" width="12" height="13" viewBox="0 0 12 13"><path d="M1.5 5.5V3.3A2.6 2.6 0 0 1 6.7 3.3" stroke="#afb1b3" stroke-width="1.5" fill="none"/><rect x="3" y="6" width="8.5" height="6.5" fill="#afb1b3"/></svg>
<div class="a" style="left:121px;top:729px;width:4px;height:1px;background:#000000;"></div>
<div class="a" style="left:129px;top:729px;width:3px;height:1px;background:#000000;"></div>
<div class="a" style="left:140px;top:729px;width:14px;height:1px;background:#000000;"></div>
<div class="a" style="left:160px;top:729px;width:2px;height:1px;background:#000000;"></div>
<div class="a" style="left:172px;top:729px;width:2px;height:1px;background:#000000;"></div>
<div class="a" style="left:178px;top:729px;width:8px;height:1px;background:#000000;"></div>
</body></html>
